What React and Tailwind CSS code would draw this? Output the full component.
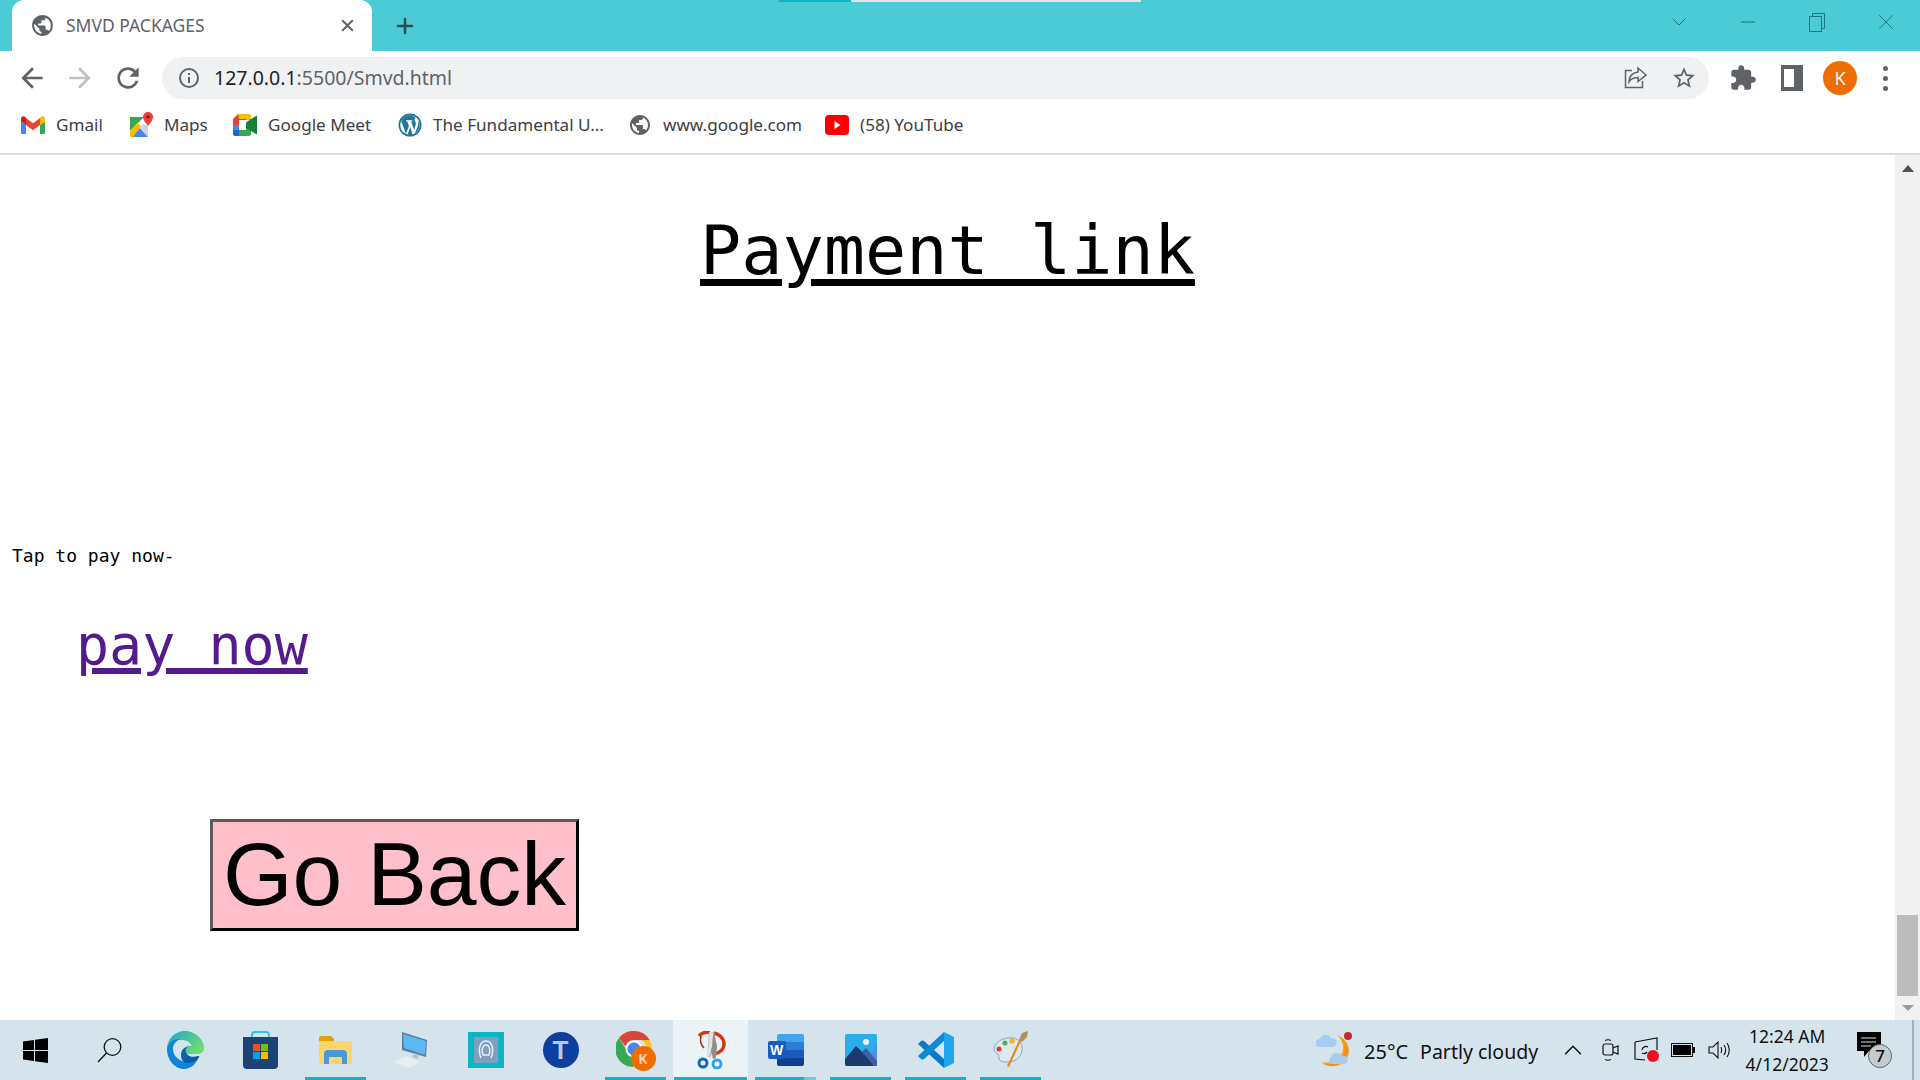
import { ChevronDown, Minus, X, Plus, ChevronUp } from "lucide-react";

const uiFont = "font-['Noto_Sans',sans-serif]";
const monoFont = "font-['DejaVu_Sans_Mono',monospace]";

function Mat({ d, size = 24, fill = "#5f6368" }) {
  return (
    <svg width={size} height={size} viewBox="0 0 24 24" fill={fill}>
      <path d={d} />
    </svg>
  );
}

const globe =
  "M12 2C6.48 2 2 6.48 2 12s4.48 10 10 10 10-4.48 10-10S17.52 2 12 2zm-1 17.93c-3.95-.49-7-3.85-7-7.93 0-.62.08-1.21.21-1.79L9 15v1c0 1.1.9 2 2 2v1.93zm6.9-2.54c-.26-.81-1-1.39-1.9-1.39h-1v-3c0-.55-.45-1-1-1H8v-2h2c.55 0 1-.45 1-1V7h2c1.1 0 2-.9 2-2v-.41c2.93 1.19 5 4.06 5 7.41 0 2.08-.8 3.97-2.1 5.39z";
const back = "M20 11H7.83l5.59-5.59L12 4l-8 8 8 8 1.41-1.41L7.83 13H20v-2z";
const forward = "M4 11h12.17l-5.59-5.59L12 4l8 8-8 8-1.41-1.41L16.17 13H4v-2z";
const reload =
  "M17.65 6.35C16.2 4.9 14.21 4 12 4c-4.42 0-7.99 3.58-7.99 8s3.57 8 7.99 8c3.73 0 6.84-2.55 7.73-6h-2.08c-.82 2.33-3.04 4-5.65 4-3.31 0-6-2.69-6-6s2.69-6 6-6c1.66 0 3.14.69 4.22 1.78L13 11h7V4l-2.35 2.35z";
const star =
  "M22 9.24l-7.19-.62L12 2 9.19 8.63 2 9.24l5.46 4.73L5.82 21 12 17.27 18.18 21l-1.63-7.03L22 9.24zM12 15.4l-3.76 2.27 1-4.28-3.32-2.88 4.38-.38L12 6.1l1.71 4.04 4.38.38-3.32 2.88 1 4.28L12 15.4z";
const puzzle =
  "M20.5 11H19V7c0-1.1-.9-2-2-2h-4V3.5C13 2.12 11.88 1 10.5 1S8 2.12 8 3.5V5H4c-1.1 0-1.99.9-1.99 2v3.8H3.5c1.49 0 2.7 1.21 2.7 2.7s-1.21 2.7-2.7 2.7H2V20c0 1.1.9 2 2 2h3.8v-1.5c0-1.49 1.21-2.7 2.7-2.7 1.49 0 2.7 1.21 2.7 2.7V22H17c1.1 0 2-.9 2-2v-4h1.5c1.38 0 2.5-1.12 2.5-2.5S21.88 11 20.5 11z";

function GmailIcon() {
  return (
    <svg width="24" height="20" viewBox="0 0 24 18">
      <path d="M1.6 18H5V9L0 5.3V16.4C0 17.3.7 18 1.6 18z" fill="#4285f4" />
      <path d="M19 18h3.4c.9 0 1.6-.7 1.6-1.6V5.3L19 9z" fill="#34a853" />
      <path d="M19 2v7l5-3.700V2.600C24 .6 21.700-.6 20 .7z" fill="#fbbc04" />
      <path d="M5 9V2l7 5.200L19 2v7l-7 5.200z" fill="#ea4335" />
      <path d="M0 2.600v2.700L5 9V2L4 .7C2.300-.6 0 .6 0 2.600z" fill="#c5221f" />
    </svg>
  );
}

function MapsIcon() {
  return (
    <svg width="24" height="26" viewBox="0 0 24 26">
      <path d="M1 5h14L1 19z" fill="#34a853" />
      <path d="M1 19v6h5L12 14l-4-3z" fill="#fbbc04" />
      <path d="M4 25h15l-8-9z" fill="#4285f4" />
      <path d="M19 25V14l-5-2-3 3z" fill="#c8d4e8" />
      <path d="M19 0c-3 0-5 2.300-5 5 0 3.500 5 9 5 9s5-5.500 5-9c0-2.700-2-5-5-5z" fill="#ea4335" />
      <circle cx="19" cy="5" r="1.800" fill="#a50e0e" />
    </svg>
  );
}

function MeetIcon() {
  return (
    <svg width="24" height="22" viewBox="0 0 24 22">
      <path d="M5 0h11v6H6v5H0V5z" fill="#ea4335" />
      <path d="M5 0h11a2 2 0 0 1 2 2v4h-5V5H6z" fill="#fbbc04" />
      <path d="M0 11h6v5h-6z" fill="#4285f4" />
      <path d="M0 16h6v6H2a2 2 0 0 1-2-2z" fill="#1967d2" />
      <path d="M6 16h7v-3h5v7a2 2 0 0 1-2 2H6z" fill="#34a853" />
      <path d="M13 8.500l5-3.500 6-3.500v19L18 17l-5-3z" fill="#188038" />
    </svg>
  );
}

function WordpressIcon() {
  return (
    <svg width="24" height="24" viewBox="0 0 24 24">
      <circle cx="12" cy="12" r="11.500" fill="#21759b" />
      <circle cx="12" cy="12" r="9.800" fill="#fff" />
      <path d="M3.200 8.200L8 21l2.900-8-1.700-4.700-1.200-.1v-1h6.400v1l-1.300.1 3.100 8.600 1.300-4.400c.6-2 .2-3.300-.5-4.500-.6-1-.8-2.200.8-3.100C15 2.600 13.500 2.300 12 2.300c-3.800 0-7.200 2.300-8.800 5.900zM12.300 14l-2.700 7.600c1.700.5 3.400.4 5-.2zM20 8.200c.5 2.200.2 4.100-.6 6l-2.700 6.400c3.100-1.800 5-5.100 5-8.600 0-1.400-.6-2.700-1.700-3.800z" fill="#21759b" />
    </svg>
  );
}

function YoutubeIcon() {
  return (
    <svg width="24" height="20" viewBox="0 0 24 20">
      <rect width="24" height="20" rx="4" fill="#ff0000" />
      <path d="M9.500 6l6 4-6 4z" fill="#fff" />
    </svg>
  );
}

function ShareIcon() {
  return (
    <svg width="24" height="24" viewBox="0 0 24 24" fill="none" stroke="#5f6368" strokeWidth="1.500">
      <path d="M9 4.500H2.500v17h17V15" />
      <path d="M15 2l8 7-8 6.500V11.500c-4 0-7 1-9 4.500 0-5 3-9 9-10z" />
    </svg>
  );
}

function SidePanelIcon() {
  return (
    <svg width="22" height="26" viewBox="0 0 22 26">
      <rect width="22" height="26" fill="#5f6368" />
      <rect x="3" y="4" width="10" height="18" fill="#fff" />
    </svg>
  );
}

function InfoIcon() {
  return (
    <svg width="22" height="22" viewBox="0 0 22 22" fill="none" stroke="#5f6368" strokeWidth="2">
      <circle cx="11" cy="11" r="9" />
      <path d="M11 10v6M11 6v2" />
    </svg>
  );
}

function WindowsLogo() {
  return (
    <svg width="25" height="25" viewBox="0 0 25 25" fill="#000">
      <path d="M0 3.500l11-1.500v10H0zM12 1.800L25 0v12H12zM0 13h11v10L0 21.500zM12 13h13v12l-13-1.800z" />
    </svg>
  );
}

function SearchIcon() {
  return (
    <svg width="25" height="25" viewBox="0 0 25 25" fill="none" stroke="#111" strokeWidth="1.300">
      <circle cx="15.500" cy="9" r="8.300" />
      <path d="M9.500 15L1 24" />
    </svg>
  );
}

function EdgeIcon() {
  return (
    <svg width="37" height="38" viewBox="0 0 37 38">
      <defs>
        <linearGradient id="edgeTop" x1="0" y1="0" x2="1" y2="0.6">
          <stop offset="0" stopColor="#1aa3d8" />
          <stop offset="1" stopColor="#6fdc6c" />
        </linearGradient>
        <linearGradient id="edgeBottom" x1="0" y1="0" x2="1" y2="1">
          <stop offset="0" stopColor="#0c6fc0" />
          <stop offset="1" stopColor="#0b4f9c" />
        </linearGradient>
      </defs>
      <path d="M0 18C0 8 8 0 18 0s19 8 19 17c0 5-4 6-8 6H17c-1-5 3-9 8-8-2-4-6-6-10-6C6 9 0 11 0 18z" fill="url(#edgeTop)" />
      <path d="M0 18c0-6 6-10 13-10-4 2-7 5-7 10 0 8 8 13 14 13 5 0 9-2 12-5-3 7-8 12-15 12C8 38 0 29 0 18z" fill="#1183d8" />
      <path d="M14 24c0-5 3-8 8-9-2 1-4 3-3 6 1 4 6 6 12 4 1 0 2 0 1 1-3 4-7 6-12 6-4 0-6-4-6-8z" fill="url(#edgeBottom)" />
    </svg>
  );
}

function StoreIcon() {
  return (
    <svg width="35" height="38" viewBox="0 0 35 38">
      <path d="M9 8V4c0-2 1-3 3-3h11c2 0 3 1 3 3v4" fill="none" stroke="#35c0ee" strokeWidth="2" />
      <path d="M0 6h35v28a4 4 0 0 1-4 4H4a4 4 0 0 1-4-4z" fill="#1c4373" />
      <rect x="10" y="13" width="7" height="7" fill="#f25022" />
      <rect x="18" y="13" width="7" height="7" fill="#7fba00" />
      <rect x="10" y="21" width="7" height="7" fill="#00a4ef" />
      <rect x="18" y="21" width="7" height="7" fill="#ffb900" />
    </svg>
  );
}

function ExplorerIcon() {
  return (
    <svg width="33" height="29" viewBox="0 0 33 29">
      <path d="M0 2a2 2 0 0 1 2-2h10l3 3v6H0z" fill="#dfa00e" />
      <path d="M0 5h31a2 2 0 0 1 2 2v19a2 2 0 0 1-2 2H2a2 2 0 0 1-2-2z" fill="#fdd66a" />
      <path d="M5 28V18a4 4 0 0 1 4-4h15a4 4 0 0 1 4 4v10h-5v-7H10v7z" fill="#4a97d9" />
    </svg>
  );
}

function PcIcon() {
  return (
    <svg width="34" height="36" viewBox="0 0 34 36">
      <path d="M8 0l25 8-1 17-24-7z" fill="#5d7c96" />
      <path d="M9 2l23 7-1 14L10 16z" fill="#5ab8f5" />
      <path d="M20 21l5 2-2 4-5-2z" fill="#b9c3ca" />
      <path d="M12 24l10 4 4 2-11 6L0 30z" fill="#e8edf0" />
    </svg>
  );
}

function TealAppIcon() {
  return (
    <div className="flex h-[36px] w-[36px] items-center justify-center bg-[#0fb4c4]">
      <div className="flex h-[26px] w-[24px] items-center justify-center bg-[#7f9fc0]">
        <svg width="16" height="20" viewBox="0 0 16 20" fill="none" stroke="#e8f0f6" strokeWidth="1.500">
          <path d="M3 18C1 14 1 8 2 6c1-3 3-5 6-5s5 2 6 5c1 2 1 8-1 12" />
          <path d="M5 15c-1-3-1-6 0-8 .5-1 2-2 3-2s2.500 1 3 2c1 2 1 5 0 8z" />
        </svg>
      </div>
    </div>
  );
}

function TIcon() {
  return (
    <div className="flex h-[36px] w-[36px] items-center justify-center rounded-full bg-[#0c3f9e]">
      <span className="font-['Liberation_Sans',sans-serif] text-[26px] font-bold leading-none text-[#b6c8ea]">T</span>
    </div>
  );
}

function ChromeIcon() {
  return (
    <div className="relative h-[38px] w-[40px]">
      <svg width="36" height="36" viewBox="0 0 36 36">
        <path d="M18 0a18 18 0 0 1 15.600 9H18a9 9 0 0 0-8.600 6.300L3 7A18 18 0 0 1 18 0z" fill="#db4437" />
        <path d="M33.600 9A18 18 0 0 1 20 35.900l6-11A9 9 0 0 0 25 9z" fill="#fbc02d" />
        <path d="M3 7l7 11a9 9 0 0 0 11 8.500L17 36A18 18 0 0 1 3 7z" fill="#3aa757" />
        <circle cx="18" cy="18" r="7.500" fill="#4285f4" stroke="#fff" strokeWidth="2" />
      </svg>
      <div className="absolute bottom-[-2px] right-0 flex h-[25px] w-[25px] items-center justify-center rounded-full bg-[#ef6c00] font-['Noto_Sans',sans-serif] text-[14px] font-bold text-[#fcd0a8]">
        K
      </div>
    </div>
  );
}

function SnipIcon() {
  return (
    <svg width="30" height="38" viewBox="0 0 30 38">
      <path d="M3 5C6 1 11 1 14 1" fill="none" stroke="#d13a10" strokeWidth="3.500" />
      <path d="M18 2c5 1 10 5 10 11 0 5-4 9-10 10" fill="none" stroke="#d13a10" strokeWidth="3.500" />
      <path d="M5 5c-1 4 0 9 3 12" fill="none" stroke="#a82c0c" strokeWidth="1.500" />
      <path d="M13 1h5l2 15-6 11-3-2z" fill="#c4c4c4" />
      <path d="M18 1l3 14-1 12-3 1-3-12z" fill="#8f8f8f" />
      <path d="M14 1l3 1-1 14-4 11-2-1 3-12z" fill="#e4e4e4" />
      <circle cx="7" cy="32" r="4" fill="none" stroke="#1567b8" strokeWidth="3" />
      <circle cx="21" cy="33" r="4" fill="none" stroke="#2fa4e7" strokeWidth="3" />
    </svg>
  );
}

function WordIcon() {
  return (
    <div className="relative h-[32px] w-[36px]">
      <div className="absolute right-0 top-0 flex h-[32px] w-[27px] flex-col overflow-hidden rounded-[2px]">
        <div className="flex-1 bg-[#41a5ee]" />
        <div className="flex-1 bg-[#2b7cd3]" />
        <div className="flex-1 bg-[#185abd]" />
        <div className="flex-1 bg-[#103f91]" />
      </div>
      <div className="absolute left-0 top-[7px] flex h-[18px] w-[18px] items-center justify-center rounded-[2px] bg-[#185abd] font-['Liberation_Sans',sans-serif] text-[14px] font-bold text-white">
        W
      </div>
    </div>
  );
}

function PhotosIcon() {
  return (
    <svg width="32" height="32" viewBox="0 0 32 32">
      <rect width="32" height="32" rx="2" fill="#29aeea" />
      <path d="M32 8v24H20z" fill="#5d86db" opacity="0.7" />
      <circle cx="21" cy="8" r="3" fill="#e6f4fb" />
      <path d="M0 25l11-13 21 20H2a2 2 0 0 1-2-2z" fill="#1b3a6e" />
      <path d="M17 18l4-4 11 13v5h-3z" fill="#3f5ea5" />
    </svg>
  );
}

function VscodeIcon() {
  return (
    <svg width="36" height="36" viewBox="0 0 36 36">
      <path d="M26 36V27L6 9Q4 8 3 9L0 12z" fill="#0a78c2" />
      <path d="M26 0V9L6 27Q4 28 3 27L0 24z" fill="#0a8ad8" />
      <path d="M26 0l10 5v26l-10 5z" fill="#1fa6ee" />
    </svg>
  );
}

function PaintIcon() {
  return (
    <svg width="36" height="38" viewBox="0 0 36 38">
      <path d="M1 18C2 10 12 6 20 7c7 1 10 6 9 13-1 6-8 12-16 11-4 0-6-1-7-3s1-3-1-5c-2-1-4-2-4-5z" fill="#dce9f2" stroke="#88a5bd" strokeWidth="1" />
      <circle cx="6" cy="18" r="2.500" fill="#e33a2e" />
      <circle cx="12" cy="12" r="2.500" fill="#54a858" />
      <circle cx="19" cy="10" r="2.800" fill="#f0b72f" />
      <path d="M28 10L16 36l-2-1L26 9z" fill="#e88a1e" />
      <path d="M26 9l3-7 6-2-1 6-5 5z" fill="#b98d58" />
    </svg>
  );
}

function WeatherIcon() {
  return (
    <svg width="36" height="36" viewBox="0 0 36 36">
      <path d="M21 3c6 5 8 13 4 20-4 6-12 9-20 7 6 5 15 6 22 1 9-7 9-22-6-28z" fill="#f2a52a" />
      <path d="M24 5c5 6 6 14 2 20-4 5-11 8-19 7 7 3 15 2 20-3 7-7 6-18-3-24z" fill="#f08f1a" />
      <circle cx="32" cy="4" r="4" fill="#c62828" />
      <path d="M3 15a4 4 0 0 1 1-8 6 6 0 0 1 11-1 4 4 0 0 1 2 9z" fill="#a6cdf0" />
      <path d="M15 32a4 4 0 0 1 0-7 6 6 0 0 1 11-1 4 4 0 0 1 3 8z" fill="#a6cdf0" />
    </svg>
  );
}

function MeetTrayIcon() {
  return (
    <svg width="18" height="24" viewBox="0 0 18 24" fill="none" stroke="#111" strokeWidth="1.200">
      <rect x="1" y="6" width="10" height="11" rx="2" />
      <path d="M11 10l5-2v8l-5-2" />
      <path d="M3 2.500c2-1 4-1 6 0M3 21.500c2 1 4 1 6 0" />
    </svg>
  );
}

function UpdateTrayIcon() {
  return (
    <svg width="26" height="26" viewBox="0 0 26 26" fill="none" stroke="#111" strokeWidth="1.200">
      <path d="M1 5l22-4v4M1 5v17l10 1" />
      <path d="M23 5v8" />
      <path d="M8 13a4 4 0 0 1 6-3M13 15a4 4 0 0 1-5 1" />
      <circle cx="19" cy="19" r="6" fill="#e81123" stroke="none" />
    </svg>
  );
}

function BatteryIcon() {
  return (
    <svg width="24" height="14" viewBox="0 0 24 14">
      <rect x="0.500" y="0.500" width="21" height="13" fill="none" stroke="#111" />
      <rect x="2" y="2" width="18" height="10" fill="#000" />
      <rect x="22" y="4" width="2" height="6" fill="#111" />
    </svg>
  );
}

function SpeakerIcon() {
  return (
    <svg width="24" height="20" viewBox="0 0 24 20" fill="none" stroke="#111" strokeWidth="1.100">
      <path d="M1 7v6h4l5 5V2L5 7z" />
      <path d="M13 7c1 2 1 4 0 6M16 5c2 3 2 7 0 10M19 3c3 4 3 10 0 14" />
    </svg>
  );
}

function Bookmark({ icon, label, width }) {
  return (
    <div className={`flex items-center ${width}`}>
      <div className="flex w-[24px] shrink-0 justify-center">{icon}</div>
      <span className={`ml-[11px] whitespace-nowrap text-[17.100px] text-[#3c4043] ${uiFont}`}>{label}</span>
    </div>
  );
}

function TaskItem({ children, running, active, extra }) {
  return (
    <div className={`relative flex h-[60px] w-[75px] shrink-0 items-center justify-center ${active ? "bg-[#ecf3f6]" : ""}`}>
      {children}
      {running && (
        <div className={`absolute bottom-0 flex h-[3px] ${active ? "left-[1px] right-[1px]" : "left-[7px] right-[7px]"}`}>
          <div className="flex-1 bg-[#0fb4c4]" />
          {extra && <div className="w-[12px] bg-[#63d3dc]" />}
        </div>
      )}
    </div>
  );
}

function TabStrip() {
  return (
    <div className="relative flex h-[51px] shrink-0 items-end bg-[#4acbd6]">
      <div className="absolute left-[779px] top-0 flex h-[2px]">
        <div className="w-[72px] bg-[#0fb4c4]" />
        <div className="w-[290px] bg-[#e4e4e4]" />
      </div>
      <div className="ml-[12px] flex h-[51px] w-[360px] items-center rounded-t-[12px] bg-white pl-[18px] pr-[15px]">
        <Mat d={globe} size={25} />
        <span className={`ml-[11px] flex-1 text-[17.500px] text-[#5f6368] ${uiFont}`}>SMVD PACKAGES</span>
        <X size={19} strokeWidth={2.500} color="#5f6368" />
      </div>
      <div className="flex h-[51px] w-[66px] items-center justify-center">
        <Plus size={24} strokeWidth={2.500} color="#2f4b52" />
      </div>
      <div className="ml-auto flex h-[44px] items-center self-start text-[#1f7580]">
        <div className="flex w-[69px] justify-center"><ChevronDown size={24} strokeWidth={1} /></div>
        <div className="flex w-[69px] justify-center"><Minus size={22} strokeWidth={1.200} /></div>
        <div className="flex w-[69px] justify-center">
          <svg width="16" height="19" viewBox="0 0 16 19" fill="none" stroke="currentColor" strokeWidth="1">
            <rect x="0.500" y="3.500" width="12" height="15" />
            <path d="M3.500 3.500v-3h12v15h-3" />
          </svg>
        </div>
        <div className="flex w-[69px] justify-center"><X size={26} strokeWidth={0.900} /></div>
      </div>
    </div>
  );
}

function Toolbar() {
  return (
    <div className="flex h-[52px] shrink-0 items-center bg-white pt-[2px]">
      <div className="flex w-[162px] items-center gap-[16px] pl-[16px]">
        <Mat d={back} size={32} />
        <Mat d={forward} size={32} fill="#bfc1c3" />
        <Mat d={reload} size={32} />
      </div>
      <div className="flex h-[42px] w-[1547px] items-center rounded-full bg-[#eff1f3] pl-[16px] pr-[12px]">
        <InfoIcon />
        <span className={`ml-[14px] flex-1 text-[19.500px] text-[#5f6368] ${uiFont}`}>
          <span className="text-[#202124]">127.0.0.1</span>:5500/Smvd.html
        </span>
        <ShareIcon />
        <div className="ml-[24px]"><Mat d={star} size={26} /></div>
      </div>
      <div className="flex flex-1 items-center pl-[20px]">
        <Mat d={puzzle} size={28} />
        <div className="ml-[24px]"><SidePanelIcon /></div>
        <div className={`ml-[20px] flex h-[34px] w-[34px] items-center justify-center rounded-full bg-[#ef6c00] text-[18px] text-white ${uiFont}`}>K</div>
        <div className="ml-[26px] flex flex-col gap-[5px]">
          <div className="h-[5px] w-[5px] rounded-full bg-[#5f6368]" />
          <div className="h-[5px] w-[5px] rounded-full bg-[#5f6368]" />
          <div className="h-[5px] w-[5px] rounded-full bg-[#5f6368]" />
        </div>
      </div>
    </div>
  );
}

function Bookmarks() {
  return (
    <div className="flex h-[52px] shrink-0 items-center border-b-2 border-[#dadce0] bg-white pb-[6px] pl-[21px]">
      <Bookmark width="w-[108px]" icon={<GmailIcon />} label="Gmail" />
      <Bookmark width="w-[104px]" icon={<MapsIcon />} label="Maps" />
      <Bookmark width="w-[165px]" icon={<MeetIcon />} label="Google Meet" />
      <Bookmark width="w-[230px]" icon={<WordpressIcon />} label="The Fundamental U..." />
      <Bookmark width="w-[197px]" icon={<Mat d={globe} size={26} />} label="www.google.com" />
      <Bookmark width="w-[150px]" icon={<YoutubeIcon />} label="(58) YouTube" />
    </div>
  );
}

function Scrollbar() {
  return (
    <aside className="flex w-[25px] shrink-0 flex-col items-center bg-[#f1f1f1]">
      <div className="mt-[10px] h-0 w-0 border-x-[6px] border-b-[7px] border-x-transparent border-b-[#505050]" />
      <div className="mt-[743px] h-[81px] w-[21px] bg-[#bcbcbc]" />
      <div className="mt-[9px] h-0 w-0 border-x-[6px] border-t-[6px] border-x-transparent border-t-[#9a9a9a]" />
    </aside>
  );
}

function Taskbar() {
  return (
    <div className={`flex h-[60px] shrink-0 items-center bg-[#d5e4ec] ${uiFont}`}>
      <div className="flex h-[60px] w-[70px] items-center justify-center"><WindowsLogo /></div>
      <div className="flex h-[60px] w-[78px] items-center justify-center"><SearchIcon /></div>
      <TaskItem><EdgeIcon /></TaskItem>
      <TaskItem><StoreIcon /></TaskItem>
      <TaskItem running><ExplorerIcon /></TaskItem>
      <TaskItem><PcIcon /></TaskItem>
      <TaskItem><TealAppIcon /></TaskItem>
      <TaskItem><TIcon /></TaskItem>
      <TaskItem running><ChromeIcon /></TaskItem>
      <TaskItem running active><SnipIcon /></TaskItem>
      <TaskItem running extra><WordIcon /></TaskItem>
      <TaskItem running><PhotosIcon /></TaskItem>
      <TaskItem running><VscodeIcon /></TaskItem>
      <TaskItem running><PaintIcon /></TaskItem>

      <div className="ml-[268px] flex items-center text-[#111]">
        <WeatherIcon />
        <span className="ml-[12px] pt-[4px] text-[20px]">25°C</span>
        <span className="ml-[12px] pt-[4px] text-[19.500px]">Partly cloudy</span>
        <ChevronUp size={30} strokeWidth={1.200} color="#111" className="ml-[20px]" />
        <div className="ml-[14px]"><MeetTrayIcon /></div>
        <div className="ml-[14px]"><UpdateTrayIcon /></div>
        <div className="ml-[11px]"><BatteryIcon /></div>
        <div className="ml-[13px]"><SpeakerIcon /></div>
        <div className="ml-[10px] flex w-[90px] flex-col items-center text-[17.500px] leading-[28px]">
          <span>12:24 AM</span>
          <span>4/12/2023</span>
        </div>
        <div className="relative ml-[25px] h-[36px] w-[24px]">
          <svg width="24" height="28" viewBox="0 0 24 28">
            <path d="M0 0h24v19H12l-5 6v-6H0z" fill="#000" />
            <path d="M4 6h15M4 10h15M4 14h10" stroke="#d5e4ec" strokeWidth="1.200" />
          </svg>
          <div className="absolute left-[11px] top-[12px] flex h-[24px] w-[24px] items-center justify-center rounded-full border border-[#666] bg-[#c4ccd0] text-[17px] font-medium">7</div>
        </div>
      </div>
      <div className="ml-auto mr-[6px] h-[60px] w-[2px] bg-[#9fb1ba]" />
    </div>
  );
}

export default function App() {
  return (
    <div className="flex h-[1080px] w-[1920px] flex-col overflow-hidden bg-white">
      <TabStrip />
      <Toolbar />
      <Bookmarks />
      <div className="flex h-[865px] shrink-0">
        <main className={`flex-1 ${monoFont} text-black`}>
          <h1 className="mt-[55px] text-center text-[68.500px] font-normal leading-[80px] underline decoration-[7px] underline-offset-[5px]">
            Payment link
          </h1>
          <p className="ml-[12px] mt-[254px] text-[18px] leading-[24px]">Tap to pay now-</p>
          <a href="#pay" className="ml-[76px] mt-[45px] block text-[55px] leading-[64px] text-[#551a8b] underline decoration-[6px] underline-offset-[4px]">
            pay now
          </a>
          <button className="ml-[210px] mt-[142px] block h-[112px] w-[369px] border-[3px] border-t-[#5c5c5c] border-l-[#5c5c5c] border-b-black border-r-black bg-[#ffc0cb] text-center font-['Liberation_Sans',sans-serif] text-[89.500px] leading-none text-black">
            Go Back
          </button>
        </main>
        <Scrollbar />
      </div>
      <Taskbar />
    </div>
  );
}
